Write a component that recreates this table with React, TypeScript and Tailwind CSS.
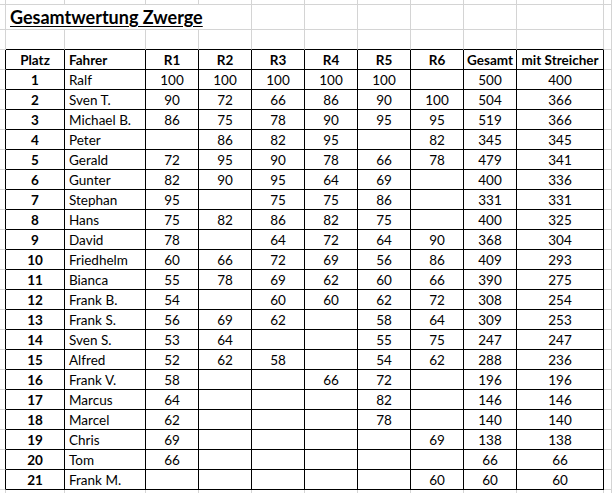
import React from "react";

type Row = {
  platz: number;
  fahrer: string;
  r: (number | null)[];
  gesamt: number;
  streicher: number;
};

const rows: Row[] = [
  { platz: 1, fahrer: "Ralf", r: [100, 100, 100, 100, 100, null], gesamt: 500, streicher: 400 },
  { platz: 2, fahrer: "Sven T.", r: [90, 72, 66, 86, 90, 100], gesamt: 504, streicher: 366 },
  { platz: 3, fahrer: "Michael B.", r: [86, 75, 78, 90, 95, 95], gesamt: 519, streicher: 366 },
  { platz: 4, fahrer: "Peter", r: [null, 86, 82, 95, null, 82], gesamt: 345, streicher: 345 },
  { platz: 5, fahrer: "Gerald", r: [72, 95, 90, 78, 66, 78], gesamt: 479, streicher: 341 },
  { platz: 6, fahrer: "Gunter", r: [82, 90, 95, 64, 69, null], gesamt: 400, streicher: 336 },
  { platz: 7, fahrer: "Stephan", r: [95, null, 75, 75, 86, null], gesamt: 331, streicher: 331 },
  { platz: 8, fahrer: "Hans", r: [75, 82, 86, 82, 75, null], gesamt: 400, streicher: 325 },
  { platz: 9, fahrer: "David", r: [78, null, 64, 72, 64, 90], gesamt: 368, streicher: 304 },
  { platz: 10, fahrer: "Friedhelm", r: [60, 66, 72, 69, 56, 86], gesamt: 409, streicher: 293 },
  { platz: 11, fahrer: "Bianca", r: [55, 78, 69, 62, 60, 66], gesamt: 390, streicher: 275 },
  { platz: 12, fahrer: "Frank B.", r: [54, null, 60, 60, 62, 72], gesamt: 308, streicher: 254 },
  { platz: 13, fahrer: "Frank S.", r: [56, 69, 62, null, 58, 64], gesamt: 309, streicher: 253 },
  { platz: 14, fahrer: "Sven S.", r: [53, 64, null, null, 55, 75], gesamt: 247, streicher: 247 },
  { platz: 15, fahrer: "Alfred", r: [52, 62, 58, null, 54, 62], gesamt: 288, streicher: 236 },
  { platz: 16, fahrer: "Frank V.", r: [58, null, null, 66, 72, null], gesamt: 196, streicher: 196 },
  { platz: 17, fahrer: "Marcus", r: [64, null, null, null, 82, null], gesamt: 146, streicher: 146 },
  { platz: 18, fahrer: "Marcel", r: [62, null, null, null, 78, null], gesamt: 140, streicher: 140 },
  { platz: 19, fahrer: "Chris", r: [69, null, null, null, null, 69], gesamt: 138, streicher: 138 },
  { platz: 20, fahrer: "Tom", r: [66, null, null, null, null, null], gesamt: 66, streicher: 66 },
  { platz: 21, fahrer: "Frank M.", r: [null, null, null, null, null, 60], gesamt: 60, streicher: 60 },
];

const grid =
  "grid grid-cols-[6px_59px_81px_53px_53px_53px_53px_53px_53px_53px_87px_8px]";

// plain sheet cell, grey gridlines
const Gray = ({ className = "" }: { className?: string }) => (
  <div className={`border-r border-b border-[#d4d4d4] ${className}`} />
);

// cell inside the bordered table
const Cell = ({
  children,
  left,
  bold,
}: {
  children?: React.ReactNode;
  left?: boolean;
  bold?: boolean;
}) => (
  <div
    className={`flex items-center border-r border-b border-black pt-[2px] leading-none whitespace-nowrap overflow-hidden ${
      left ? "justify-start pl-[4px]" : "justify-center"
    } ${bold ? "font-bold" : ""}`}
  >
    {children}
  </div>
);

const LeftEdge = () => <div className="border-r border-r-black border-b border-b-[#d4d4d4]" />;

export default function App() {
  return (
    <div
      className="w-[612px] h-[493px] overflow-hidden bg-white text-black text-[13.5px]"
      style={{ fontFamily: "Lato, 'Open Sans', sans-serif" }}
    >
      {/* partial row at the very top */}
      <div className={`${grid} h-[5px]`}>
        {Array.from({ length: 12 }).map((_, i) => (
          <Gray key={i} />
        ))}
      </div>

      {/* title row */}
      <div className={`${grid} h-[25px]`}>
        <Gray />
        <div className="col-span-4 flex items-end pl-[4px] pb-[3px] border-r border-b border-[#d4d4d4]">
          <span className="text-[18px] font-bold underline underline-offset-[2px] leading-none">
            Gesamtwertung Zwerge
          </span>
        </div>
        {Array.from({ length: 7 }).map((_, i) => (
          <Gray key={i} />
        ))}
      </div>

      {/* empty row above the table */}
      <div className={`${grid} h-[20px]`}>
        <Gray />
        {Array.from({ length: 10 }).map((_, i) => (
          <div key={i} className="border-r border-r-[#d4d4d4] border-b border-b-black" />
        ))}
        <Gray />
      </div>

      {/* header */}
      <div className={`${grid} h-[20px]`}>
        <LeftEdge />
        <Cell bold>Platz</Cell>
        <Cell bold left>Fahrer</Cell>
        {["R1", "R2", "R3", "R4", "R5", "R6", "Gesamt", "mit Streicher"].map((h) => (
          <Cell key={h} bold>
            {h}
          </Cell>
        ))}
        <Gray />
      </div>

      {rows.map((row) => (
        <div key={row.platz} className={`${grid} h-[20px]`}>
          <LeftEdge />
          <Cell bold>{row.platz}</Cell>
          <Cell left>{row.fahrer}</Cell>
          {row.r.map((v, i) => (
            <Cell key={i}>{v ?? ""}</Cell>
          ))}
          <Cell>{row.gesamt}</Cell>
          <Cell>{row.streicher}</Cell>
          <Gray />
        </div>
      ))}

      {/* next sheet row, cut by the window */}
      <div className={`${grid} h-[20px]`}>
        {Array.from({ length: 12 }).map((_, i) => (
          <Gray key={i} />
        ))}
      </div>
    </div>
  );
}
